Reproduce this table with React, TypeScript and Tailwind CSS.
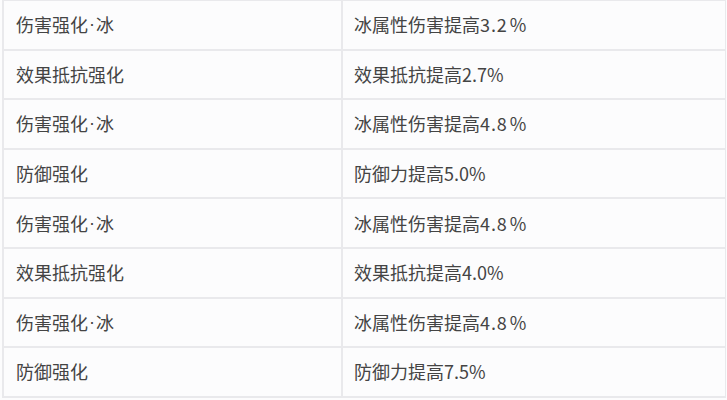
import React from 'react';

const rows = [
    ['伤害强化·冰', '冰属性伤害提高3.2%'],
    ['效果抵抗强化', '效果抵抗提高2.7%'],
    ['伤害强化·冰', '冰属性伤害提高4.8%'],
    ['防御强化', '防御力提高5.0%'],
    ['伤害强化·冰', '冰属性伤害提高4.8%'],
    ['效果抵抗强化', '效果抵抗提高4.0%'],
    ['伤害强化·冰', '冰属性伤害提高4.8%'],
    ['防御强化', '防御力提高7.5%'],
];

function Name({ text }: { text: string }) {
    const parts = text.split('·');
    if (parts.length === 1) return <>{text}</>;
    return (
        <>
            {parts[0]}
            <span className="font-['Liberation_Sans'] mx-[1px]">·</span>
            {parts[1]}
        </>
    );
}

function Effect({ text }: { text: string }) {
    const m = text.match(/^(.*?)(\d.*)$/);
    if (!m) return <>{text}</>;
    // the ice rows are set a little looser in the original
    if (!text.startsWith('冰')) return <>{text}</>;
    const num = m[2].replace('%', '');
    return (
        <>
            {m[1]}
            <span className="tracking-[0.9px]">{num}</span>
            <span className="ml-[2px]">%</span>
        </>
    );
}

export default function App() {
    return (
        <div
            className="w-[727px] h-[400px] overflow-hidden bg-[#fcfcfd] pl-[2px] pr-[1px]"
            style={{ fontFamily: '"Noto Sans CJK SC", "Noto Sans", sans-serif' }}
        >
            <div className="border-l-2 border-r border-t border-[#e9e9ec]">
                {rows.map(([name, effect], i) => (
                    <div
                        key={i}
                        className="grid grid-cols-[339px_1fr] h-[49.6px] border-b-2 border-[#e9e9ec]"
                    >
                        <div className="flex items-center pl-[12px] border-r-2 border-[#e9e9ec] text-[18px] text-[#444]">
                            <Name text={name} />
                        </div>
                        <div className="flex items-center pl-[11px] text-[18px] text-[#444]">
                            <Effect text={effect} />
                        </div>
                    </div>
                ))}
            </div>
        </div>
    );
}
